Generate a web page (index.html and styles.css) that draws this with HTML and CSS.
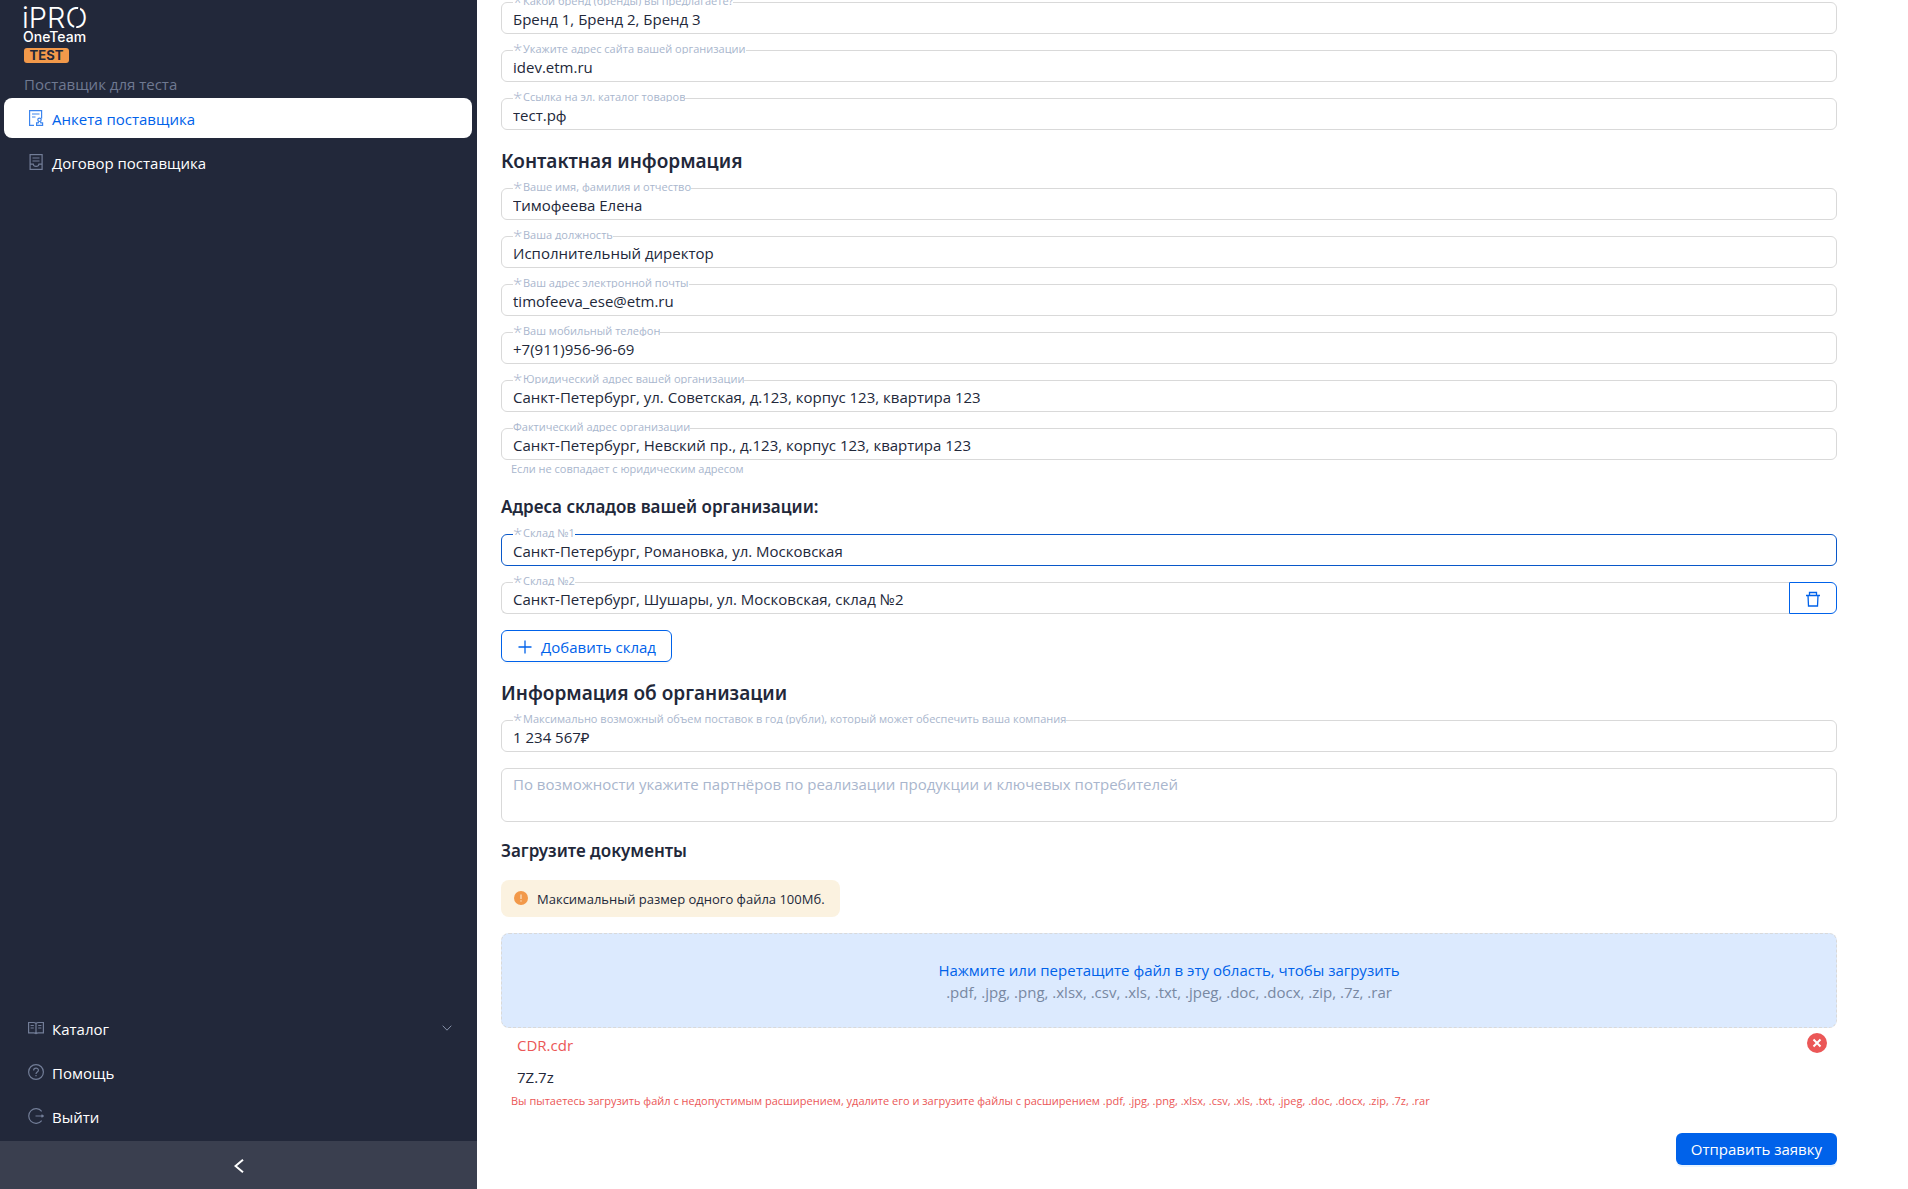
FILE: index.html
```html
<!DOCTYPE html>
<html lang="ru">
<head>
<meta charset="utf-8">
<title>Анкета поставщика</title>
<link rel="stylesheet" href="styles.css">
</head>
<body>
<div class="layout">
  <aside class="sidebar">
    <div class="brand">
      <div class="brand-name">iPR<span class="brand-o">O</span></div>
      <div class="brand-team">OneTeam</div>
      <span class="brand-badge">TEST</span>
    </div>
    <div class="menu-title">Поставщик для теста</div>
    <nav class="menu">
      <a class="menu-item active" href="#">
        <svg class="icon" viewBox="0 0 16 16"><path d="M6 15.4H1.6V.6h12v8"/><path d="M4 4h7.5M4 7h3.5"/><circle cx="11.5" cy="9.8" r="1.7"/><path d="M10.7 11.5l-.5 1.4H8.6v2.5h6v-2.5h-1.7l-.5-1.4"/></svg>
        <span>Анкета поставщика</span>
      </a>
      <a class="menu-item" href="#">
        <svg class="icon" viewBox="0 0 16 16"><rect x="2.1" y=".6" width="12" height="14.8"/><path d="M4.5 4h7M4.5 7h7M2.1 10.2h3.2c.3 3 5.3 3 5.600 0h3.200"/></svg>
        <span>Договор поставщика</span>
      </a>
    </nav>
    <nav class="menu menu-bottom">
      <a class="menu-item" href="#">
        <svg class="icon" viewBox="0 0 16 16"><path d="M8 3.500C7.300 2.800 6.400 2.500 5.500 2.500H.6v10.400h5c1 0 1.800.2 2.400.8.6-.6 1.400-.8 2.400-.8h5V2.500h-4.900c-.9 0-1.800.3-2.500 1zM8 3.500v10M2.600 5.500h3.200M2.600 8h3.200M10.200 5.500h3.200M10.200 8h3.200"/></svg>
        <span>Каталог</span>
        <svg class="chevron" viewBox="0 0 10 6"><path d="M.7.700L5 5.200 9.300.700"/></svg>
      </a>
      <a class="menu-item" href="#">
        <svg class="icon" viewBox="0 0 16 16"><circle cx="8" cy="8" r="7.400"/><path d="M5.600 6.500C5.600 3.300 10.400 3.300 10.400 6.300 10.400 8.200 8 8 8 10M8 11v1.300"/></svg>
        <span>Помощь</span>
      </a>
      <a class="menu-item" href="#">
        <svg class="icon" viewBox="0 0 16 16"><path d="M13.700 3.400a7.300 7.300 0 1 0 0 9.200M7.500 8H15M13.500 6.700L15.200 8l-1.700 1.300"/></svg>
        <span>Выйти</span>
      </a>
    </nav>
    <button class="collapse" type="button" aria-label="Свернуть меню">
      <svg viewBox="0 0 10 14"><path d="M9 .8L1.500 7 9 13.200"/></svg>
    </button>
  </aside>

  <main class="content">
    <form class="form">
      <div class="fields">
        <div class="field"><input id="brand" type="text" value="Бренд 1, Бренд 2, Бренд 3"><label for="brand"><span class="req">*</span>Какой бренд (бренды) вы предлагаете?</label></div>
        <div class="field"><input id="site" type="text" value="idev.etm.ru"><label for="site"><span class="req">*</span>Укажите адрес сайта вашей организации</label></div>
        <div class="field"><input id="catalog" type="text" value="тест.рф"><label for="catalog"><span class="req">*</span>Ссылка на эл. каталог товаров</label></div>
      </div>

      <h2>Контактная информация</h2>
      <div class="fields">
        <div class="field"><input id="name" type="text" value="Тимофеева Елена"><label for="name"><span class="req">*</span>Ваше имя, фамилия и отчество</label></div>
        <div class="field"><input id="position" type="text" value="Исполнительный директор"><label for="position"><span class="req">*</span>Ваша должность</label></div>
        <div class="field"><input id="email" type="text" value="timofeeva_ese@etm.ru"><label for="email"><span class="req">*</span>Ваш адрес электронной почты</label></div>
        <div class="field"><input id="phone" type="text" value="+7(911)956-96-69"><label for="phone"><span class="req">*</span>Ваш мобильный телефон</label></div>
        <div class="field"><input id="legal" type="text" value="Санкт-Петербург, ул. Советская, д.123, корпус 123, квартира 123"><label for="legal"><span class="req">*</span>Юридический адрес вашей организации</label></div>
        <div class="field"><input id="actual" type="text" value="Санкт-Петербург, Невский пр., д.123, корпус 123, квартира 123"><label for="actual">Фактический адрес организации</label></div>
      </div>
      <p class="hint">Если не совпадает с юридическим адресом</p>

      <h3>Адреса складов вашей организации:</h3>
      <div class="fields">
        <div class="field focused"><input id="stock1" type="text" value="Санкт-Петербург, Романовка, ул. Московская"><label for="stock1"><span class="req">*</span>Склад №1</label></div>
        <div class="field with-action"><input id="stock2" type="text" value="Санкт-Петербург, Шушары, ул. Московская, склад №2"><label for="stock2"><span class="req">*</span>Склад №2</label>
          <button class="delete" type="button" aria-label="Удалить склад"><svg viewBox="0 0 16 16"><path d="M1 4.500h14M4.500 4V1.500h7V4M3 4.500l.5 10.500h9l.5-10.500"/></svg></button>
        </div>
      </div>
      <button class="add" type="button"><svg viewBox="0 0 14 14"><path d="M7 .5v13M.5 7h13"/></svg><span>Добавить склад</span></button>

      <h2>Информация об организации</h2>
      <div class="fields">
        <div class="field"><input id="volume" type="text" value="1 234 567₽"><label for="volume"><span class="req">*</span>Максимально возможный объем поставок в год (рубли), который может обеспечить ваша компания</label></div>
        <textarea aria-label="Партнёры и ключевые потребители" placeholder="По возможности укажите партнёров по реализации продукции и ключевых потребителей"></textarea>
      </div>

      <h3>Загрузите документы</h3>
      <div class="notice">
        <svg viewBox="0 0 14 14"><circle class="dot" cx="7" cy="7" r="7"/><path d="M7 3.500v4.500M7 9.300v1.300"/></svg>
        <span>Максимальный размер одного файла 100Мб.</span>
      </div>
      <button class="dropzone" type="button">
        <span class="drop-title">Нажмите или перетащите файл в эту область, чтобы загрузить</span>
        <span class="drop-types">.pdf, .jpg, .png, .xlsx, .csv, .xls, .txt, .jpeg, .doc, .docx, .zip, .7z, .rar</span>
      </button>
      <ul class="files">
        <li class="bad"><span>CDR.cdr</span><button class="remove" type="button" aria-label="Удалить файл"><svg viewBox="0 0 20 20"><path d="M6.500 6.500l7 7M13.500 6.500l-7 7"/></svg></button></li>
        <li><span>7Z.7z</span></li>
      </ul>
      <p class="error">Вы пытаетесь загрузить файл с недопустимым расширением, удалите его и загрузите файлы с расширением .pdf, .jpg, .png, .xlsx, .csv, .xls, .txt, .jpeg, .doc, .docx, .zip, .7z, .rar</p>
      <button class="submit" type="button">Отправить заявку</button>
    </form>
  </main>
</div>
</body>
</html>
```
FILE: styles.css
```css
* { box-sizing: border-box; }

body {
  margin: 0;
  background: #fff;
  color: #22283a;
  font: 15px/22px "Open Sans", "Noto Sans", sans-serif;
}

button, input, textarea { font: inherit; color: inherit; }
button { cursor: pointer; }
svg { fill: none; stroke: currentColor; flex: none; }

.layout { display: flex; min-height: 100vh; }

/* Sidebar */
.sidebar {
  display: flex;
  flex-direction: column;
  width: 25%;
  background: #22283a;
  color: #fff;
}
.brand { padding: 4px 24px 0 22px; font-family: Inter, sans-serif; }
.brand-name { font-size: 29px; line-height: 28px; font-weight: 300; }
.brand-o { position: relative; }
.brand-o::after {
  content: "";
  position: absolute;
  left: 50%;
  top: 4px;
  bottom: 2px;
  width: 2px;
  background: #22283a;
  transform: rotate(12deg);
}
.brand-team { margin-left: 1px; font-size: 14px; line-height: 10px; font-weight: 500; }
.brand-badge {
  display: block;
  width: 45px;
  margin: 6px 0 0 2px;
  border-radius: 3px;
  background: #f2994a;
  color: #22283a;
  font-size: 13px;
  line-height: 15px;
  font-weight: 700;
  text-align: center;
}
.menu-title { padding: 10px 24px 1px; color: #6f7991; }
.menu { display: grid; gap: 4px; padding: 2px 5px 4px 4px; }
.menu-bottom { margin-top: auto; padding-bottom: 5px; }
.menu-item {
  display: flex;
  align-items: center;
  gap: 8px;
  height: 40px;
  padding: 2px 20px 0 24px;
  border-radius: 8px;
  color: #fff;
  text-decoration: none;
}
.menu-item .icon { width: 16px; height: 16px; margin-top: -2px; color: #727d97; stroke-width: 1.2; }
.menu-item.active { background: #fff; color: #0062ea; }
.menu-item.active .icon { color: #3c85ee; }
.chevron { width: 10px; height: 6px; margin: -2px 0 0 auto; color: #8791a8; }
.collapse {
  height: 48px;
  padding: 4px 0 0;
  border: 0;
  background: #3a3f4f;
  color: #fff;
}
.collapse svg { width: 10px; height: 14px; stroke-width: 2; }

/* Form */
.content { flex: 1; min-width: 0; padding: 2px 71px 24px 24px; }
.form { display: flex; flex-direction: column; }
.fields { display: grid; gap: 16px; }
.field { position: relative; display: flex; }
.field input, textarea {
  width: 100%;
  border: 1px solid #d9d9d9;
  border-radius: 6px;
  background: #fff;
  outline: 0;
}
.field input { height: 32px; padding: 1px 11px 0; }
.field label {
  position: absolute;
  left: 12px;
  top: -10px;
  height: 14px;
  overflow: hidden;
  background: #fff;
  color: #a9b6cd;
  font-size: 11px;
  line-height: 17px;
}
.req {
  display: inline-block;
  width: 10px;
  font-size: 17px;
  font-weight: 300;
  line-height: 14px;
  vertical-align: -3px;
}
.field.focused input { border-color: #0958c9; }
.with-action input { border-radius: 6px 0 0 6px; border-right: 0; }
.delete {
  flex: none;
  width: 48px;
  height: 32px;
  padding: 0;
  border: 1px solid #0062ea;
  border-radius: 0 6px 6px 0;
  background: #fff;
  color: #0062ea;
}
.delete svg { display: block; width: 16px; height: 16px; margin: 1px auto 0; stroke-width: 1.300; }

h2, h3 { font-weight: 600; font-family: "Noto Sans", "Open Sans", sans-serif; }
h2 { margin: 17px 0 13px; font-size: 19px; line-height: 28px; }
h3 { margin: 16px 0 14px; font-size: 17px; line-height: 26px; }
.hint { margin: 0; padding-left: 10px; color: #a9b6cd; font-size: 11px; line-height: 18px; }

.add {
  display: flex;
  align-items: center;
  align-self: flex-start;
  gap: 9px;
  height: 32px;
  margin-top: 16px;
  padding: 1px 15px 0 16px;
  border: 1px solid #0062ea;
  border-radius: 6px;
  background: #fff;
  box-shadow: 0 2px 0 rgba(0, 0, 0, .02);
  color: #0062ea;
}
.add svg { width: 14px; height: 14px; stroke-width: 1.300; }

textarea {
  display: block;
  height: 54px;
  padding: 4px 11px;
  resize: none;
}
textarea::placeholder { color: #a9b6cd; opacity: 1; }

.notice {
  display: flex;
  align-items: center;
  align-self: flex-start;
  gap: 9px;
  margin: 2px 0 16px;
  padding: 9px 15px 8px 13px;
  border-radius: 8px;
  background: #fbf2e0;
  font-size: 13px;
  line-height: 20px;
}
.notice svg { width: 14px; height: 14px; margin-top: -2px; stroke: #fbf2e0; }
.notice .dot { fill: #f2994a; stroke: none; }

.dropzone {
  display: grid;
  padding: 25px 16px 24px;
  border: 1px dashed #d9d9d9;
  border-radius: 8px;
  background: #dceafe;
  text-align: center;
}
.drop-title { color: #0062ea; }
.drop-types { color: #7888a2; }

.files { margin: 0; padding: 1px 0 0; list-style: none; }
.files li {
  display: flex;
  align-items: center;
  justify-content: space-between;
  height: 32px;
  padding: 0 10px 0 16px;
}
.files .bad { color: #eb5757; }
.remove {
  width: 20px;
  height: 20px;
  margin-top: -4px;
  padding: 0;
  border: 0;
  border-radius: 50%;
  background: #eb5757;
  color: #fff;
}
.remove svg { display: block; width: 20px; height: 20px; stroke-width: 2; }
.error { margin: 0; padding-left: 10px; color: #eb5757; font-size: 11px; line-height: 16px; }
.submit {
  align-self: flex-end;
  height: 32px;
  margin-top: 24px;
  padding: 0 15px;
  border: 0;
  border-radius: 6px;
  background: #0062ea;
  box-shadow: 0 2px 0 #e8f4ff;
  color: #fff;
}
```
